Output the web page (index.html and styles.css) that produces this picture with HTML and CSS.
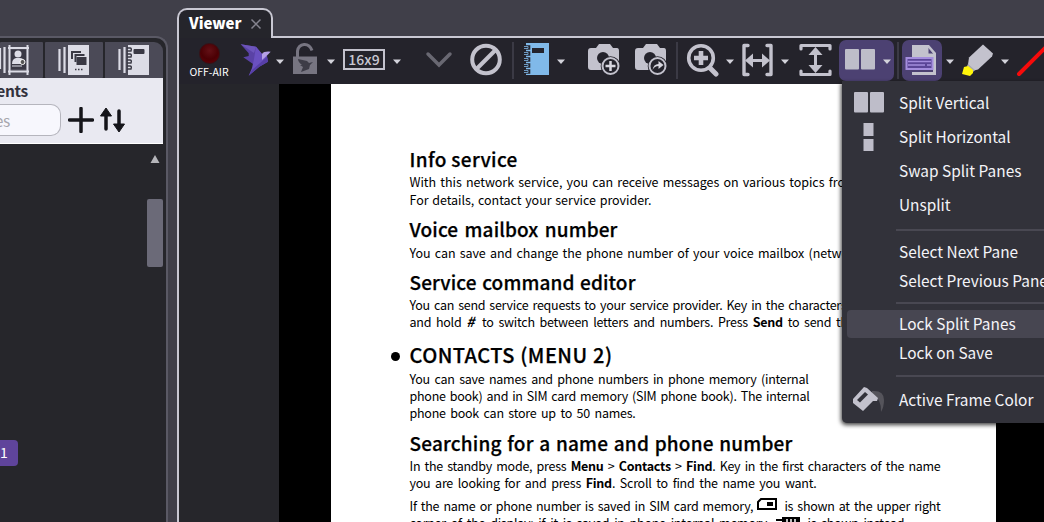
FILE: index.html
```html
<!DOCTYPE html>
<html lang="en">
<head>
<meta charset="utf-8">
<title>Viewer</title>
<link rel="stylesheet" href="styles.css">
</head>
<body>
<svg class="defs" width="0" height="0">
  <defs>
    <symbol id="caret" viewBox="0 0 10 6"><path d="M1 .5h8L5 5z" fill="#d3d3db"/></symbol>
    <symbol id="camera" viewBox="0 0 36 36"><path d="M5 6h5l3-4h11l3 4h4q2 0 2 3v17q0 2-2 2H5q-3 0-3-3V9q0-3 3-3z" fill="#c3c2cd"/><circle cx="17" cy="16" r="6" fill="#24232c"/><circle cx="24.500" cy="24" r="9.800" fill="#24232c"/><circle cx="24.500" cy="24" r="8" fill="#24232c" stroke="#c3c2cd" stroke-width="2"/></symbol>
    <symbol id="panes" viewBox="0 0 32 24"><rect x="1" y="1" width="14" height="20.500" rx="1"/><rect x="17" y="1" width="14" height="20.500" rx="1"/></symbol>
  </defs>
</svg>
<div class="app">
  <aside class="panel">
    <div class="tabs">
      <div class="tab tab-first"><svg width="43" height="36" viewBox="0 0 43 36"><path d="M0 6v21M4.500 5v26" stroke="#dcdce6" stroke-width="2.200"/><path d="M9.500 3v30M27.500 3v30M8 6h21M8 29.500h21" stroke="#dcdce6" stroke-width="2"/><path d="M11 8h15v19H11z" fill="#393844"/><circle cx="18" cy="12" r="3.500" fill="#dcdce6"/><path d="M12 22q0-5 4-6h4q3 0 4 3v3z" fill="#dcdce6"/><circle cx="22.500" cy="20" r="2.500" fill="#555" stroke="#fff"/><path d="M12 24h10" stroke="#dcdce6"/></svg></div>
      <div class="tab"><svg width="57" height="36" viewBox="0 0 57 36"><path d="M14.500 7v22M19.500 5v26" stroke="#dcdce6" stroke-width="2.200"/><path d="M23 3h21v30H23z" fill="#dcdce6"/><path d="M27 17v-7h9M30.500 20v-7h9" fill="none" stroke="#393844" stroke-width="2"/><path d="M31.500 15h10v8h-10z" fill="#393844"/><path d="M30 27.500h8" stroke="#393844" stroke-width="1.500" stroke-dasharray="1.500 1.500"/></svg></div>
      <div class="tab"><svg width="57" height="36" viewBox="0 0 57 36"><path d="M14.500 7v21M19.500 5v26" stroke="#dcdce6" stroke-width="2.200"/><path d="M23 3h21v30H23z" fill="#dcdce6"/><rect x="28.500" y="7" width="11" height="5" rx="1" fill="#393844"/><g fill="none" stroke="#393844" stroke-width="1.400"><path d="M22 6h3q2 0 1 3h-4M22 12h3q2 0 1 3h-4M22 18h3q2 0 1 3h-4M22 24h3q2 0 1 3h-4"/></g></svg></div>
    </div>
    <div class="filter">
      <div class="filter-title"><span>ents</span></div>
      <div class="filter-row">
        <div class="search"><span>es</span></div>
        <svg class="plus" width="26" height="26" viewBox="0 0 26 26"><path d="M13 1.500v23M1.500 13h23" stroke="#15151a" stroke-width="3.500" stroke-linecap="round"/></svg>
        <svg width="26" height="28" viewBox="0 0 26 28"><path d="M6 8v15M19 5v14" stroke="#15151a" stroke-width="3.500" stroke-linecap="round"/><path d="M6 2l5.500 8H.5zM19 26l-5.500-8h11z" fill="#15151a" stroke="#15151a" stroke-linejoin="round"/></svg>
      </div>
    </div>
    <div class="list">
      <div class="badge">1</div>
      <div class="scroll"><svg width="10" height="8" viewBox="0 0 10 8"><path d="M5 0l4.500 8h-9z" fill="#b5b5ba"/></svg><div class="thumb"></div></div>
    </div>
  </aside>

  <main class="viewer">
    <div class="viewer-tab"><span>Viewer</span><svg width="12" height="12" viewBox="0 0 12 12"><path d="M1.500 1.500l9 9M10.500 1.500l-9 9" stroke="#85848f" stroke-width="1.500"/></svg></div>
    <div class="viewer-body">
      <div class="toolbar">
        <div class="offair"><i class="lamp"></i><span>OFF-AIR</span></div>
        <svg width="32" height="36" viewBox="0 0 32 36"><path d="M.7 2.300L16 4.700l6 7.300-2 8-7 2-9.700-6.700L8.700 14v-2.700z" fill="#5a42a6"/><path d="M.7 2.300L16 4.700 14 11z" fill="#6d55bb"/><path d="M16 4.700l6 7.300 5 2 1 5.700-8.700 5-10.600 9L12 26l2-9z" fill="#6a50c0"/><path d="M27 15l1 4.700-8.700 5-10.600 9L12 28z" fill="#573fa8"/><path d="M22 18v-6q2-3 8.700-2.300L27 13.500z" fill="#b5a0e6"/></svg>
        <svg class="caret"><use href="#caret"/></svg>
        <svg width="26" height="36" viewBox="0 0 26 36"><path d="M5.500 15V9q1-6 6.500-6.500T20 8.500" fill="none" stroke="#777581" stroke-width="3"/><path d="M1 14.500h24V32H1z" fill="#777581"/><path d="M6 17l9 2 2 2 4-1-3 3-1 4-8 3 2-5-3-2h2q-4-3-4-6z" fill="#3d3c47"/></svg>
        <svg class="caret"><use href="#caret"/></svg>
        <div class="ratio">16x9</div>
        <svg class="caret"><use href="#caret"/></svg>
        <svg width="28" height="36" viewBox="0 0 28 36"><path d="M3 12l11 11 11-11" fill="none" stroke="#696872" stroke-width="3.500" stroke-linecap="round"/></svg>
        <svg width="32" height="36" viewBox="0 0 32 36"><circle cx="16" cy="17.500" r="13.800" fill="none" stroke="#c3c2cd" stroke-width="4"/><path d="M25 8.500l-18 18" stroke="#c3c2cd" stroke-width="4"/></svg>
        <i class="sep"></i>
        <svg width="28" height="36" viewBox="0 0 28 36"><path d="M4 1h23v32H4z" fill="#80b9e9"/><rect x="10" y="6" width="12" height="5" fill="#24232c"/><path d="M2 4.500h5v2H2M2 10.500h5v2H2M2 16.500h5v2H2M2 22.500h5v2H2M2 28.500h5v2H2" fill="none" stroke="#24232c" stroke-width="2.600"/><path d="M2 4.500h4v2H2M2 10.500h4v2H2M2 16.500h4v2H2M2 22.500h4v2H2M2 28.500h4v2H2" fill="none" stroke="#80b9e9" stroke-width=".8"/></svg>
        <svg class="caret"><use href="#caret"/></svg>
        <svg width="36" height="36" viewBox="0 0 36 36"><use href="#camera"/><path d="M24.500 19v10M19.500 24h10" stroke="#d7d6df" stroke-width="2.500"/></svg>
        <svg width="36" height="36" viewBox="0 0 36 36"><use href="#camera"/><path d="M19.500 28q1-6 6-6v-3l5 4-5 4v-3q-4 0-6 4z" fill="#d7d6df"/></svg>
        <i class="sep"></i>
        <svg width="33" height="36" viewBox="0 0 33 36"><circle cx="15" cy="16" r="12.300" fill="none" stroke="#c3c2cd" stroke-width="3.600"/><path d="M24 26l6 6" stroke="#c3c2cd" stroke-width="5" stroke-linecap="round"/><path d="M15 9v14M8 16h14" stroke="#c3c2cd" stroke-width="4.600"/></svg>
        <svg class="caret"><use href="#caret"/></svg>
        <svg width="33" height="36" viewBox="0 0 33 36"><path d="M7 3.500H3v29h4M26 3.500h4v29h-4" fill="none" stroke="#c3c2cd" stroke-width="3.400" stroke-linecap="round" stroke-linejoin="round"/><path d="M9 18.500h15" stroke="#c3c2cd" stroke-width="3"/><path d="M4 18.500l8-7v14zM29 18.500l-8-7v14z" fill="#c3c2cd"/></svg>
        <svg class="caret"><use href="#caret"/></svg>
        <svg width="33" height="36" viewBox="0 0 33 36"><path d="M2 7V3.500h29V7M2 29v3.500h29V29" fill="none" stroke="#c3c2cd" stroke-width="3.200" stroke-linecap="round" stroke-linejoin="round"/><path d="M16.500 10v16" stroke="#c3c2cd" stroke-width="3"/><path d="M16.500 5l7 8h-14zM16.500 31l7-8h-14z" fill="#c3c2cd"/></svg>
        <div class="active split"><svg width="32" height="24" fill="#bebdc9"><use href="#panes"/></svg><svg class="caret"><use href="#caret"/></svg></div>
        <i class="sep"></i>
        <div class="active print"><svg width="34" height="34" viewBox="0 0 34 34"><path d="M8 2h17l7 8v22H8v-3h21V12h-6V5H8z" fill="#c3c2cd"/><path d="M8 3h15v9h6v3H8z" fill="#c3c2cd"/><path d="M24 4v7h6z" fill="#4d4275" stroke="#c3c2cd"/><rect x="2.500" y="15" width="26" height="11" fill="#5b4597" stroke="#a48ddd" stroke-width="2"/><path d="M4 18.500h23M4 22h17M23 22h4" stroke="#a48ddd" stroke-width="1.700"/></svg></div>
        <svg class="caret"><use href="#caret"/></svg>
        <svg width="34" height="36" viewBox="0 0 34 36"><path d="M23 2.500l10 9-1 3-14 13-4 1-6-6 1-7z" fill="#c3c2cd"/><path d="M8 22l7 6-2 2-6-6z" fill="#aaa9b2"/><path d="M4 25l4-1 5 4v3l-3 3-8-2z" fill="#fff60a"/></svg>
        <svg class="caret"><use href="#caret"/></svg>
        <svg width="28" height="36" viewBox="0 0 28 36"><path d="M3 32L30 5" stroke="#f60b0b" stroke-width="4" stroke-linecap="round"/></svg>
      </div>

      <div class="stage">
        <article class="page">
          <h2 class="w108 info">Info service</h2>
          <p class="first"><span class="w447">With this network service, you can receive messages on various topics from</span><span class="w242">For details, contact your service provider.</span></p>
          <h2 class="w208 voice">Voice mailbox number</h2>
          <p class="one"><span class="w451">You can save and change the phone number of your voice mailbox (network</span></p>
          <h2 class="w226 command">Service command editor</h2>
          <p><span class="w437">You can send service requests to your service provider. Key in the characters</span><span class="w445">and hold <b class="hash">#</b> to switch between letters and numbers. Press <b>Send</b> to send the</span></p>
          <h2 class="contacts"><span class="w203">CONTACTS (MENU 2)</span></h2>
          <p><span class="w399">You can save names and phone numbers in phone memory (internal</span><span class="w400">phone book) and in SIM card memory (SIM phone book). The internal</span><span class="w226">phone book can store up to 50 names.</span></p>
          <h2 class="w383 searching">Searching for a name and phone number</h2>
          <p><span class="w531">In the standby mode, press <b>Menu</b> &gt; <b>Contacts</b> &gt; <b>Find</b>. Key in the first characters of the name</span><span class="w407">you are looking for and press <b>Find</b>. Scroll to find the name you want.</span></p>
          <p class="last"><span class="w531">If the name or phone number is saved in SIM card memory, <svg width="23" height="14" viewBox="0 0 23 14"><path d="M1 4l3-3h15v10H1z" fill="none" stroke="#000" stroke-width="2"/><path d="M10 4h6v4h-6z"/></svg> is shown at the upper right</span><span class="w498">corner of the display; if it is saved in phone internal memory, <svg width="28" height="14" viewBox="0 0 28 14"><path d="M1 4h6V2h18v10H7V6H1z"/><path d="M12 4v7M16 4v7M20 4v7" stroke="#fff" stroke-width="1.500"/></svg> is shown instead.</span></p>
        </article>
      </div>
    </div>
  </main>

  <nav class="menu">
    <div class="row tall"><svg width="32" height="24" fill="#bebdc9"><use href="#panes"/></svg><span>Split Vertical</span></div>
    <div class="row tall"><svg width="32" height="30" viewBox="0 0 32 30"><path d="M10.500 1h10v13h-10zM10.500 17h10v12h-10z" fill="#bebdc9"/></svg><span>Split Horizontal</span></div>
    <div class="row tall"><span>Swap Split Panes</span></div>
    <div class="row tall"><span>Unsplit</span></div>
    <hr>
    <div class="row"><span>Select Next Pane</span></div>
    <div class="row"><span>Select Previous Pane</span></div>
    <hr>
    <div class="row hover"><span>Lock Split Panes</span></div>
    <div class="row"><span>Lock on Save</span></div>
    <hr class="wide">
    <div class="row"><svg width="32" height="28" viewBox="0 0 32 28"><path d="M19 5q12-1 12 9 0 7-3 12 1-12-9-19z" fill="#55545b"/><path d="M11 1l3 1 11 10-1 3-4 0-10 10L0 17v-4z" fill="#c3c2cd"/><path d="M12 6l3 2.500-8 8-3-2.500z" fill="#32323a"/></svg><span>Active Frame Color</span></div>
  </nav>
</div>
</body>
</html>
```
FILE: styles.css
```css
* { box-sizing: border-box; }
body {
  margin: 0;
  width: 1044px;
  height: 522px;
  overflow: hidden;
  background: #403f49;
  font-family: "Noto Sans CJK SC", "Noto Sans", sans-serif;
}
svg { display: block; flex: none; }
.defs { position: absolute; }
.app { display: flex; position: relative; width: 1044px; height: 522px; overflow: hidden; }

/* Document list */
.panel {
  width: 168px;
  flex: none;
  margin: 36px 9px 0 0;
  padding: 4px 3px 0 0;
  border: solid #5a5965;
  border-width: 2px 2px 0 0;
  border-radius: 0 12px 0 0;
  background: #26262b;
}
.tabs { display: flex; gap: 2px; height: 36px; }
.tab { width: 58px; background: #4b4a57; border-radius: 1px; }
.tab-first { width: 43px; }
.tab:last-child { border-radius: 0 9px 0 0; }
.filter { height: 66px; background: #e9e9f1; border-bottom: 1px solid #fff; }
.filter-title, .search { display: flex; justify-content: flex-end; }
.filter-title { width: 28px; height: 26px; font-weight: bold; font-size: 15.5px; letter-spacing: -.3px; line-height: 25px; color: #33323d; }
.filter-row { display: flex; align-items: center; height: 32px; }
.search {
  width: 61px;
  height: 32px;
  padding-right: 50px;
  border: 1px solid #b5b5bd;
  border-left: 0;
  border-radius: 0 10px 10px 0;
  background: #f7f7fd;
  color: #a7a7ae;
  font-size: 15.5px;
  letter-spacing: -.3px;
  line-height: 30px;
  white-space: nowrap;
}
.plus { margin: 0 6px 0 7px; }
.list { display: flex; justify-content: space-between; height: 378px; }
.badge {
  width: 18px;
  height: 26px;
  margin-top: 296px;
  border-radius: 0 4px 4px 0;
  background: #5f449b;
  color: #fff;
  font-size: 14px;
  line-height: 25px;
}
.scroll { display: flex; flex-direction: column; align-items: center; width: 16px; padding-top: 11px; }
.thumb { width: 16px; height: 68px; margin-top: 36px; border-radius: 2px; background: #6b6a78; }

/* Viewer window */
.viewer { flex: 1; padding-top: 8px; min-width: 0; }
.viewer-tab {
  position: relative;
  z-index: 1;
  display: flex;
  align-items: center;
  gap: 9px;
  width: 96px;
  height: 30px;
  padding-left: 10px;
  border: 2px solid #c9c8d3;
  border-bottom: 0;
  border-radius: 10px 10px 0 0;
  background: #25252b;
  color: #fff;
  font-size: 15px;
  font-weight: 900;
  line-height: 26px;
}
.viewer-tab span { margin-top: -3px; }
.viewer-body {
  height: 486px;
  margin-top: -2px;
  border: solid #c9c8d3;
  border-width: 2px 0 0 2px;
  background: #25252b;
}
.toolbar {
  display: grid;
  grid-template-columns: 52px 35px 17px 34px 17px 49px 33px 45px 42px 10px 34px 30px 47px 43px 10px 39px 16px 39px 19px 40px 58px 5px 43px 15px 40px 16px 28px;
  align-items: center;
  height: 46px;
  padding: 0 0 2px 9px;
  background: #24232b;
}
.caret { width: 10px; height: 6px; margin-top: 3px; }
.offair { display: flex; flex-direction: column; align-items: center; width: 42px; padding-top: 1px; color: #fff; font-size: 10.5px; line-height: 14px; }
.lamp { width: 21px; height: 21px; margin-top: 1px; margin-bottom: 1px; border: 1px solid #371015; border-radius: 50%; background: radial-gradient(circle at 50% 35%, #631016, #4b0004 55%, #610006 85%); }
.ratio { width: 42px; height: 21px; margin-top: -1px; border: 2px solid #c3c2cd; color: #c9c8d2; font-size: 14px; font-weight: 500; line-height: 16px; text-align: center; }
.sep { width: 2px; height: 37px; background: #3b3a45; }
.active { display: flex; align-items: center; height: 41px; border-radius: 7px; background: #4c4172; }
.split { width: 55px; gap: 6px; padding-left: 5px; }
.print { width: 40px; padding-left: 2px; }
.stage { height: 438px; padding: 0 48px 0 152px; background: linear-gradient(90deg, #26262b 100px, #000 100px); }

/* Manual page */
.page {
  height: 438px;
  padding: 63px 0 0 78.5px;
  overflow: hidden;
  background: #fff;
  color: #000;
}
.page h2, .page p { margin: 0; text-align-last: justify; white-space: nowrap; }
.page h2 { font-size: 19px; font-weight: 500; line-height: 24px; height: 24px; -webkit-text-stroke: .25px #000; letter-spacing: .1px; }
.page h2.info { letter-spacing: .35px; }
.page p { margin-top: 2px; font-size: 12.5px; line-height: 17px; letter-spacing: -.26px; }
.page p span { display: block; }
.page p.first { line-height: 17.5px; letter-spacing: -.04px; }
.page p.one { margin-top: 3px; letter-spacing: -.08px; }
.page p.last { margin-top: 6px; }
.page p svg { display: inline-block; vertical-align: -1px; }
.page .voice, .page .command { margin-top: 9px; }
.page .contacts { display: flex; margin-top: 13px; font-size: 20px; letter-spacing: .45px; }
.page .contacts::before { content: ""; flex: none; width: 9px; height: 9px; margin: 9px 10px 0 -19px; border-radius: 50%; background: #000; }
.page .contacts + p { margin-top: 3px; }
.page .searching { margin-top: 10px; letter-spacing: .2px; }
.hash { font-size: 14px; font-style: italic; line-height: 1; margin-right: 3px; }
.w108 { width: 108px; }
.w203 { width: 203px; }
.w208 { width: 208px; }
.w226 { width: 226px; }
.w242 { width: 242px; }
.w383 { width: 383px; }
.w399 { width: 399px; }
.w400 { width: 400px; }
.w407 { width: 407px; }
.w437 { width: 437px; }
.w445 { width: 445px; }
.w447 { width: 447px; }
.w451 { width: 451px; }
.w498 { width: 498px; }
.w531 { width: 531px; }

/* Split menu */
.menu {
  position: absolute;
  z-index: 2;
  left: 842px;
  top: 81px;
  width: 240px;
  height: 342px;
  padding: 5px 5px 0;
  border-radius: 0 0 0 5px;
  background: #32323a;
  box-shadow: -1px 2px 4px rgba(0, 0, 0, .75);
  color: #f4f4f8;
  font-size: 15.4px;
}
.row { display: flex; align-items: center; height: 29px; padding-left: 6px; white-space: nowrap; }
.row span { margin-left: auto; width: 178px; margin-top: -2px; line-height: 26px; }
.row.tall { height: 34px; }
.row.hover { height: 28px; background: #474651; border-radius: 4px; }
.menu hr { height: 2px; margin: 7px 0 6px 49px; border: 0; background: #494852; }
.menu hr.wide { margin: 8px 0 8px 49px; }
```
